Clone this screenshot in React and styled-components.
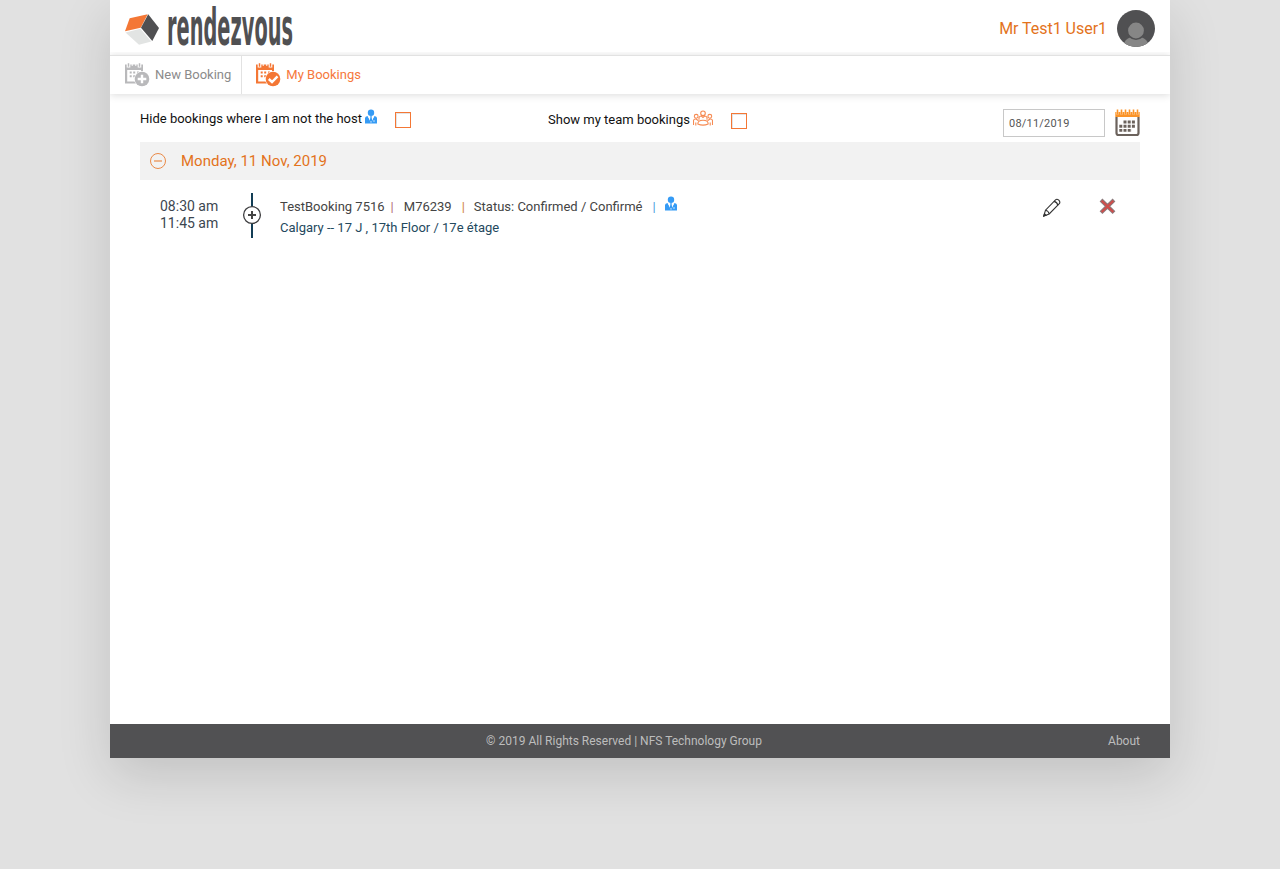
import React from 'react';
import styled, { createGlobalStyle } from 'styled-components';

const Global = createGlobalStyle`
  * { box-sizing: border-box; }
  body { margin: 0; background: #e1e1e1; font-family: Roboto, "Liberation Sans", sans-serif; font-size: 13px; color: #444; }
  svg { display: block; flex: none; }
`;

const Page = styled.div`
  width: 1060px;
  height: 758px;
  margin: 0 auto 111px;
  display: flex;
  flex-direction: column;
  background: #fff;
  box-shadow: 0 17px 50px rgba(0, 0, 0, 0.14);
`;
const Header = styled.header`
  height: 55px;
  display: flex;
  align-items: flex-start;
  padding: 7px 15px 0;
`;
const Brand = styled.div`
  display: flex;
  flex: 1;
  gap: 9px;
`;
const User = styled.div`
  display: flex;
  gap: 10px;
  padding-top: 3px;
  font-size: 16px;
  line-height: 37px;
  letter-spacing: -0.03px;
  color: #e3731c;
`;
const Nav = styled.nav`
  height: 39px;
  display: flex;
  border-top: 1px solid #e2e2e2;
  background: #fff;
  box-shadow: 0 1px 8px rgba(0, 0, 0, 0.15);
  clip-path: inset(-3px 0 -12px 0);
`;
const Tab = styled.a`
  display: flex;
  gap: 5px;
  padding: 7px 10px 0 ${p => (p.$active ? 14 : 15)}px;
  border-right: ${p => (p.$active ? 0 : 1)}px solid #e2e2e2;
  line-height: 23px;
  color: ${p => (p.$active ? '#f6783c' : '#8b8b8b')};
`;
const Main = styled.main`
  flex: 1;
  padding: 14px 30px 0;
`;
const Filters = styled.div`
  height: 34px;
  display: flex;
  color: #111;
`;
const Filter = styled.label`
  display: flex;
  width: ${p => p.$width}px;
  padding-top: ${p => p.$top}px;
  line-height: 20px;
  gap: 3px;
`;
const Check = styled.span`
  width: 16px;
  height: 16px;
  margin: 3px 0 0 ${p => p.$gap}px;
  border: 1px solid #f47735;
  box-shadow: inset 1px 1px 0 #e4e4e4;
`;
const DateBox = styled.div`
  width: 102px;
  height: 28px;
  margin: 1px 10px 0 auto;
  padding-left: 5px;
  border: 1px solid #c8c8c8;
  line-height: 27px;
  font-size: 11px;
  letter-spacing: 0.2px;
  color: #555;
`;
const DayBar = styled.div`
  height: 38px;
  display: flex;
  align-items: center;
  gap: 14px;
  padding-left: 9px;
  background: #f2f2f2;
  color: #e3731c;
  font-size: 15px;
`;
const Booking = styled.div`
  display: flex;
  padding-top: 13px;
`;
const Times = styled.div`
  width: 102px;
  padding: 5px 0 0 20px;
  font-size: 14px;
  line-height: 17px;
  color: #3c4650;
`;
const Details = styled.div`
  flex: 1;
  padding: 3px 0 0 18px;
  line-height: 21px;
`;
const Line = styled.div`
  display: flex;
  color: ${p => p.$color};
`;
const Bar = styled.span`
  margin: 0 ${p => p.$right}px 0 ${p => p.$left}px;
  color: ${p => p.$color};
`;
const Actions = styled.div`
  display: flex;
  gap: 38px;
  padding: 5px 24px 0 0;
`;
const Footer = styled.footer`
  height: 34px;
  display: grid;
  grid-template-columns: 1fr auto 1fr;
  padding: 0 30px 0 0;
  background: #515153;
  color: #bdbdbd;
  font-size: 12px;
  line-height: 34px;
`;
const Copyright = styled.span`
  margin: 0 1px 0 -1px;
`;
const About = styled.a`
  text-align: right;
`;

const CubeLogo = () => (
  <svg width="34" height="38" viewBox="0 0 34 38">
    <path d="M0 24.3L4.7 11.3L22.7 7.3L15.7 20.7Z" fill="#f47735" />
    <path d="M23.2 7.3L34 21L27.3 34L16 20.7Z" fill="#505052" />
    <path d="M0.5 25.4L15.4 21.8L26.3 34.4L14 37.8Z" fill="#e2e4e3" />
  </svg>
);
const Wordmark = () => (
  <svg width="126" height="40" viewBox="0 0 126 40" overflow="visible">
    <text x="-1" y="38" fontFamily="'DejaVu Sans', sans-serif" fontWeight="700" fontSize="52" textLength="126" lengthAdjust="spacingAndGlyphs" fill="#505052">rendezvous</text>
  </svg>
);
const Avatar = () => (
  <svg width="38" height="37" viewBox="0 0 38 37">
    <defs><clipPath id="avatar"><ellipse cx="19" cy="18.5" rx="19" ry="18.5" /></clipPath></defs>
    <g clipPath="url(#avatar)">
      <rect width="38" height="37" fill="#505052" />
      <ellipse cx="19" cy="36" rx="12.5" ry="10" fill="#868686" />
      <circle cx="19" cy="20.5" r="8.7" fill="#868686" stroke="#505052" strokeWidth="1.6" />
    </g>
  </svg>
);
const TabIcon = ({ color, check }) => (
  <svg width="25" height="24" viewBox="0 0 25 24">
    <path d="M0 1.5H18V20.5H0Z" fill={color} />
    <path d="M2.2 7H16V18.5H2.2Z" fill="#fff" />
    <path d="M3.5 0V4.5M14.5 0V4.5" stroke="#fff" strokeWidth="3.6" />
    <path d="M7.2 0V3M10.8 0V3" stroke="#fff" strokeWidth="1" />
    <path d="M3.5 0.3V3.8M14.5 0.3V3.8" stroke={color} strokeWidth="1.5" />
    <path d="M8.2 8.5H10.2V10.5H8.2ZM12 8.5H14V10.5H12ZM4.7 8.5H6.7V10.5H4.7ZM4.7 12.3H6.7V14.3H4.7ZM8.2 12.3H10.2V14.3H8.2Z" fill={color} />
    <circle cx="17" cy="16" r="7.9" fill="#fff" />
    <circle cx="17" cy="16" r="7.3" fill={color} />
    <path d={check ? 'M12.8 16L16 19L21.5 13.3' : 'M17 11.7V20.3M12.7 16H21.3'} fill="none" stroke="#fff" strokeWidth="2.4" />
  </svg>
);
const HostIcon = () => (
  <svg width="12" height="16" viewBox="0 0 12 16">
    <circle cx="6" cy="3.8" r="3.2" fill="#359bf5" />
    <path d="M0 14.5V9Q0.2 7.3 2.5 6.9L6 13.5L9.5 6.9Q11.9 7.3 12 9V14.5Z" fill="#359bf5" />
    <path d="M2.9 6.9L6 14L9.1 6.9" fill="#fff" />
    <path d="M5 7.2H7L6.6 8.6L7.3 11.5L6 13.2L4.7 11.5L5.4 8.6Z" fill="#359bf5" />
    <path d="M8 12H10" stroke="#fff" strokeWidth="0.7" />
  </svg>
);
const TeamIcon = () => (
  <svg width="20" height="17" viewBox="0 0 20 17" fill="none" stroke="#f47735" strokeWidth="1.1" strokeOpacity="0.85">
    <circle cx="10" cy="3.3" r="2.3" />
    <circle cx="3.2" cy="6.3" r="1.9" />
    <circle cx="16.8" cy="6.3" r="1.9" />
    <path d="M6 9.8V7.5Q6.6 6.1 8.4 6L10 7.5L11.6 6Q13.4 6.1 14 7.5V9.8" />
    <path d="M4.8 14Q4.8 10.3 10 10.3T15.2 14Q10 16.3 4.8 14Z" />
    <path d="M0.5 15V10.5Q0.8 8.8 3 9L5.5 10.8M2.8 15.5V12.5M19.5 15V10.5Q19.2 8.8 17 9L14.5 10.8M17.2 15.5V12.5" />
  </svg>
);
const CalendarIcon = () => (
  <svg width="25" height="29" viewBox="0 0 25 29">
    <path d="M1.5 9V25Q1.5 27 3.5 27H21.5Q23.5 27 23.5 25V9" fill="#fff" stroke="#6b625c" strokeWidth="2.2" />
    <path d="M0.3 4H24.7V9H0.3Z" fill="#fb9428" />
    <path d="M2.5 2V6.5M6.5 2V6.5M10.5 2V6.5M14.5 2V6.5M18.5 2V6.5M22.5 2V6.5" stroke="#fff" strokeWidth="2.4" strokeOpacity="0.7" />
    <path d="M2.5 1.5V6.5M6.5 1.5V6.5M10.5 1.5V6.5M14.5 1.5V6.5M18.5 1.5V6.5M22.5 1.5V6.5" stroke="#fb9428" strokeWidth="1.6" />
    <path d="M8.5 14H21M4.3 18.2H21M4.3 22.4H17" stroke="#6b625c" strokeWidth="2.9" strokeDasharray="3 1.2" />
  </svg>
);
const CollapseIcon = () => (
  <svg width="18" height="18" viewBox="0 0 18 18" fill="none" stroke="#ea8a48">
    <circle cx="9" cy="9" r="7.5" /><path d="M5 9H13" strokeWidth="1.2" />
  </svg>
);
const Timeline = () => (
  <svg width="20" height="45" viewBox="0 0 20 45">
    <path d="M10 0V45" stroke="#123d55" strokeWidth="2" />
    <circle cx="10" cy="22" r="8.4" fill="#fff" stroke="#3e3e40" strokeWidth="1.3" />
    <path d="M10 18V26M6 22H14" stroke="#444" strokeWidth="2" />
  </svg>
);
const Pencil = () => (
  <svg width="18" height="19" viewBox="0 0 18 19" fill="none" stroke="#333" strokeWidth="1.1">
    <path d="M0.8 18L2.5 12.2L12.5 1.8Q14 0.5 15.8 2.1Q17.6 4 16.3 5.7L6.2 16Z" />
    <path d="M2.5 12.2Q5.6 12.8 6.2 16M11 3.4Q14.3 4 14.8 7.3" />
    <path d="M0.8 18L1.5 15.8L3 17.3Z" fill="#333" />
  </svg>
);
const Delete = () => (
  <svg width="17" height="17" viewBox="0 0 17 17">
    <path d="M2 2L15 14.6M15 2L2 14.6" stroke="#8b7a7c" strokeWidth="4" />
    <path d="M2.7 2.7L14.3 13.9M14.3 2.7L2.7 13.9" stroke="#cf4d4b" strokeWidth="2.1" />
  </svg>
);

export default function App() {
  return (
    <>
      <Global />
      <Page>
        <Header>
          <Brand><CubeLogo /><Wordmark /></Brand>
          <User><span>Mr Test1 User1</span><Avatar /></User>
        </Header>
        <Nav>
          <Tab><TabIcon color="#b9b9bb" />New Booking</Tab>
          <Tab $active><TabIcon color="#f47735" check />My Bookings</Tab>
        </Nav>
        <Main>
          <Filters>
            <Filter $width={408} $top={1}>Hide bookings where I am not the host<HostIcon /><Check $gap={15} /></Filter>
            <Filter $width={300} $top={2}>Show my team bookings<TeamIcon /><Check $gap={15} /></Filter>
            <DateBox>08/11/2019</DateBox>
            <CalendarIcon />
          </Filters>
          <DayBar><CollapseIcon />Monday, 11 Nov, 2019</DayBar>
          <Booking>
            <Times><div>08:30 am</div><div>11:45 am</div></Times>
            <Timeline />
            <Details>
              <Line $color="#444">
                <span>TestBooking 7516</span><Bar $left={6} $right={10} $color="#b06a78">|</Bar>
                <span>M76239</span><Bar $left={10} $right={9} $color="#d08030">|</Bar>
                <span>Status: Confirmed / Confirmé</span><Bar $left={10} $right={9} $color="#4a9ae0">|</Bar>
                <HostIcon />
              </Line>
              <Line $color="#24495e">Calgary -- 17 J , 17th Floor / 17e étage</Line>
            </Details>
            <Actions><Pencil /><Delete /></Actions>
          </Booking>
        </Main>
        <Footer>
          <span />
          <Copyright>© 2019 All Rights Reserved | NFS Technology Group</Copyright>
          <About>About</About>
        </Footer>
      </Page>
    </>
  );
}
